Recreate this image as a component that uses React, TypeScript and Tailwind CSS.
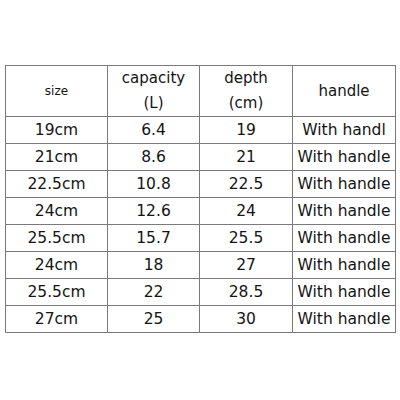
const rows = [
  ["19cm", "6.4", "19", "With handl"],
  ["21cm", "8.6", "21", "With handle"],
  ["22.5cm", "10.8", "22.5", "With handle"],
  ["24cm", "12.6", "24", "With handle"],
  ["25.5cm", "15.7", "25.5", "With handle"],
  ["24cm", "18", "27", "With handle"],
  ["25.5cm", "22", "28.5", "With handle"],
  ["27cm", "25", "30", "With handle"],
];

export default function App() {
  return (
    <div className="w-[400px] h-[400px] bg-white pt-[65px] pl-[5px] font-['DejaVu_Sans',sans-serif] text-[#141414]">
      <table className="table-fixed border-collapse w-[391px] border border-[#7a7a7a]">
        <colgroup>
          <col className="w-[102px]" />
          <col className="w-[92px]" />
          <col className="w-[93px]" />
          <col className="w-[103px]" />
        </colgroup>
        <thead>
          <tr className="h-[51px]">
            <th className="border border-[#7a7a7a] p-0 font-normal text-[12px] text-center">size</th>
            <th className="border border-[#7a7a7a] p-0 font-normal text-[15px] leading-[25px] text-center">
              capacity
              <br />
              (L)
            </th>
            <th className="border border-[#7a7a7a] p-0 font-normal text-[15px] leading-[25px] text-center">
              depth
              <br />
              (cm)
            </th>
            <th className="border border-[#7a7a7a] p-0 font-normal text-[15px] text-center">handle</th>
          </tr>
        </thead>
        <tbody>
          {rows.map((r, i) => (
            <tr key={i} className="h-[27px]">
              {r.map((c, j) => (
                <td
                  key={j}
                  className="border border-[#7a7a7a] p-0 text-[15.5px] leading-[20px] text-center whitespace-nowrap"
                >
                  {c}
                </td>
              ))}
            </tr>
          ))}
        </tbody>
      </table>
    </div>
  );
}
